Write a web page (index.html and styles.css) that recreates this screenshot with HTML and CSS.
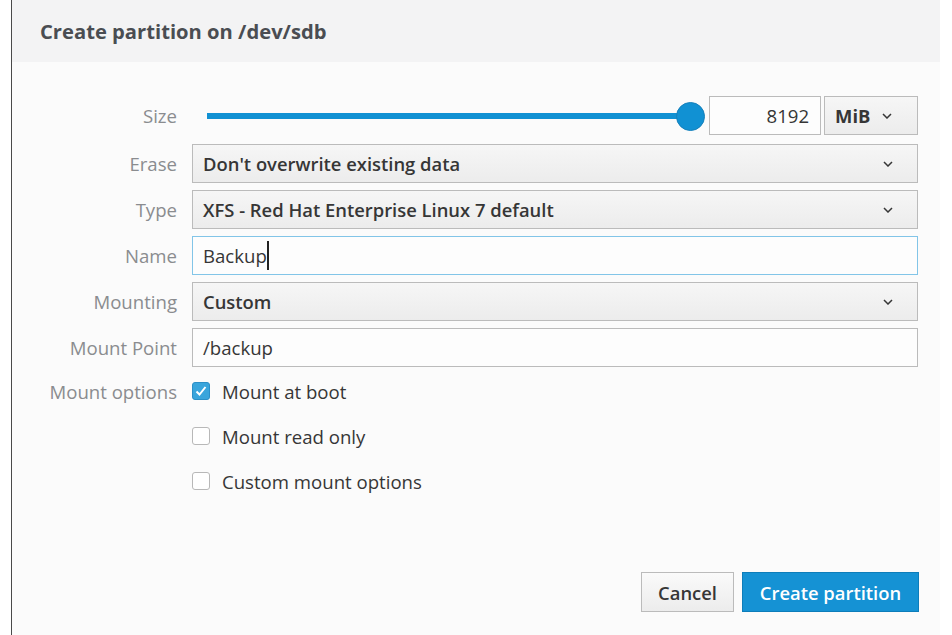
FILE: index.html
```html
<!DOCTYPE html>
<html>
<head>
<meta charset="utf-8">
<link rel="stylesheet" href="styles.css">
</head>
<body>
<div class="dialog">
  <div class="header"><h1 class="title">Create partition on /dev/sdb</h1></div>
  <div class="body">
    <div class="form">
      <div class="label row-size">Size</div>
      <div class="control size-ctl row-size">
        <div class="slider"><div class="track"></div><div class="thumb"></div></div>
        <div class="input num">8192</div>
        <div class="select unit"><span class="bold">MiB</span><svg class="chev" viewBox="0 0 10 6"><polyline points="1,1 5,5 9,1"/></svg></div>
      </div>

      <div class="label">Erase</div>
      <div class="select"><span>Don't overwrite existing data</span><svg class="chev" viewBox="0 0 10 6"><polyline points="1,1 5,5 9,1"/></svg></div>

      <div class="label">Type</div>
      <div class="select"><span>XFS - Red Hat Enterprise Linux 7 default</span><svg class="chev" viewBox="0 0 10 6"><polyline points="1,1 5,5 9,1"/></svg></div>

      <div class="label">Name</div>
      <div class="input focus"><span class="caret">Backup</span></div>

      <div class="label">Mounting</div>
      <div class="select"><span>Custom</span><svg class="chev" viewBox="0 0 10 6"><polyline points="1,1 5,5 9,1"/></svg></div>

      <div class="label">Mount Point</div>
      <div class="input">/backup</div>

      <div class="label opt-label">Mount options</div>
      <div class="checks">
        <label class="check"><span class="box on"><svg viewBox="0 0 18 18"><polyline points="4.5,9.5 7.5,12.5 13.5,5"/></svg></span>Mount at boot</label>
        <label class="check"><span class="box"></span>Mount read only</label>
        <label class="check"><span class="box"></span>Custom mount options</label>
      </div>
    </div>
    <div class="footer">
      <button class="btn">Cancel</button>
      <button class="btn primary">Create partition</button>
    </div>
  </div>
</div>
</body>
</html>
```

FILE: styles.css
```css
html, body {
  margin: 0;
  padding: 0;
  background: #ffffff;
}
body {
  font-family: "Open Sans", "Liberation Sans", sans-serif;
  color: #363636;
  width: 952px;
  height: 635px;
  overflow: hidden;
}
.dialog {
  margin-left: 11px;
  width: 929px;
  height: 635px;
  border-left: 1px solid #4a4a4a;
  background: #fbfbfb;
  box-sizing: border-box;
  display: flex;
  flex-direction: column;
}
.header {
  height: 62px;
  background: #f3f3f4;
  display: flex;
  align-items: center;
  padding-left: 28px;
  padding-bottom: 1px;
  box-sizing: border-box;
}
.title {
  margin: 0;
  font-size: 20.2px;
  font-weight: 700;
  color: #4a4d52;
}
.body {
  flex: 1;
  display: flex;
  flex-direction: column;
  padding: 36px 21px 23px 0;
}
.form {
  display: grid;
  grid-template-columns: 165px 726px;
  column-gap: 15px;
  row-gap: 7px;
  grid-auto-rows: 39px;
}
.row-size {
  margin-bottom: 4px;
}
.label {
  display: flex;
  align-items: center;
  justify-content: flex-end;
  font-size: 18.6px;
  color: #8a8c8f;
}
.size-ctl {
  display: flex;
  align-items: center;
}
.slider {
  position: relative;
  width: 514px;
  height: 39px;
}
.track {
  position: absolute;
  left: 15px;
  right: 15px;
  top: 17px;
  height: 6px;
  background: #1191d3;
}
.thumb {
  position: absolute;
  right: 0;
  top: 6px;
  width: 29px;
  height: 29px;
  border-radius: 50%;
  background: #1191d3;
  box-sizing: border-box;
  border: 1px solid #1580bb;
}
.input {
  height: 39px;
  box-sizing: border-box;
  border: 1px solid #bbbbbb;
  background: #fdfdfd;
  display: flex;
  align-items: center;
  padding: 0 10px;
  font-size: 18.6px;
  color: #363636;
}
.input.num {
  width: 112px;
  margin-left: 4px;
  justify-content: flex-end;
  padding-right: 11px;
}
.input.focus {
  border-color: #82c5e8;
}
.caret {
  border-right: 2px solid #222;
  line-height: 29px;
}
.select {
  height: 39px;
  box-sizing: border-box;
  border: 1px solid #bbbbbb;
  background: linear-gradient(#f6f6f6, #ececec);
  display: flex;
  align-items: center;
  justify-content: space-between;
  padding: 0 24px 0 10px;
  font-size: 18.4px;
  font-weight: 600;
  color: #363636;
}
.select.unit {
  width: 94px;
  margin-left: 3px;
  padding: 0 25px 0 10px;
}
.bold {
  font-weight: 700;
}
.chev {
  width: 10px;
  height: 6px;
  fill: none;
  stroke: #363636;
  stroke-width: 1.5;
}
.opt-label {
  align-self: start;
  height: 30px;
  margin-top: 2px;
}
.checks {
  grid-row: span 3;
  display: flex;
  flex-direction: column;
  gap: 15px;
  padding-top: 2px;
}
.check {
  display: flex;
  align-items: center;
  height: 30px;
  font-size: 18.6px;
  color: #363636;
}
.box {
  width: 18px;
  height: 18px;
  box-sizing: border-box;
  border: 1px solid #b8b8b8;
  border-radius: 3px;
  background: #ffffff;
  margin-right: 12px;
  display: flex;
}
.box.on {
  background: #39a5dc;
  border-color: #2b8fc7;
}
.box svg {
  width: 18px;
  height: 18px;
  fill: none;
  stroke: #ffffff;
  stroke-width: 2;
  margin: -1px;
}
.footer {
  margin-top: auto;
  display: flex;
  justify-content: flex-end;
  gap: 8px;
}
.btn {
  height: 40px;
  font-family: "Open Sans", "Liberation Sans", sans-serif;
  font-size: 18.4px;
  font-weight: 600;
  border: 1px solid #bbbbbb;
  background: linear-gradient(#fafafa, #ececec);
  color: #363636;
  padding: 0;
  width: 93px;
}
.btn.primary {
  width: 177px;
  background: #1592d4;
  border-color: #0d7dba;
  color: #ffffff;
}
```
